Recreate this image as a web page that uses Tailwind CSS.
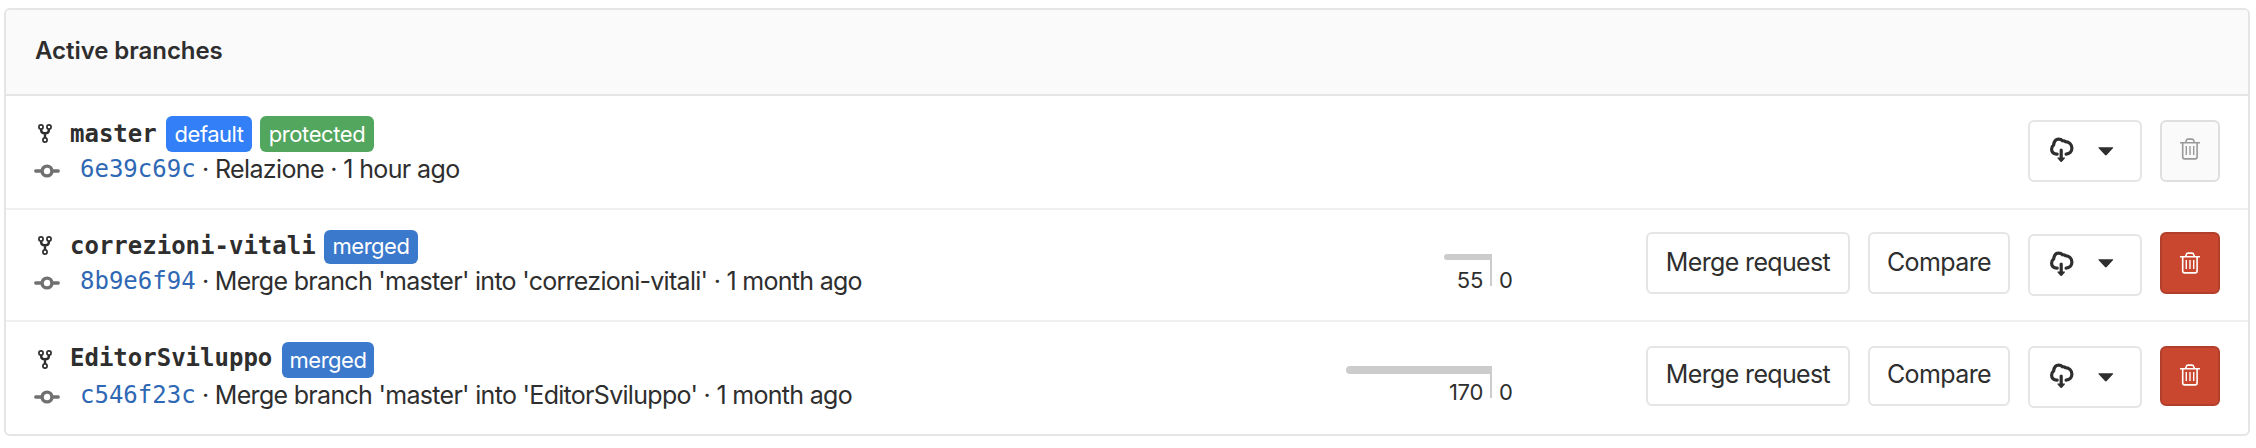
<!DOCTYPE html>
<html lang="en"><head><meta charset="utf-8"><title>Branches</title>
<script src="https://cdn.jsdelivr.net/npm/@tailwindcss/browser@4"></script></head>
<body class="bg-white font-['Inter',sans-serif] text-[25px] text-[#2e2e2e]">
<svg class="hidden">
<symbol id="fork" viewBox="0 0 14 20"><g fill="none" stroke="currentColor" stroke-width="1.7"><circle cx="3" cy="3" r="2.1"/><circle cx="11" cy="3" r="2.1"/><circle cx="7" cy="16" r="2.1"/></g><path d="M3.2 5.2v1.3c0 1.8 1.2 2.7 3.8 2.7s3.800-.9 3.800-2.700V5.200M7 9.200v4.700" fill="none" stroke="currentColor" stroke-width="2.400"/></symbol>
<symbol id="commit" viewBox="0 0 26 14"><path d="M1.800 7h5M19.200 7h5" stroke="currentColor" stroke-width="3.400" stroke-linecap="round"/><circle cx="13" cy="7" r="4.900" fill="none" stroke="currentColor" stroke-width="3.400"/></symbol>
<symbol id="cloud" viewBox="0 0 24 26"><path d="M7.200 17.100C3.500 17.300 1.600 15 1.600 12.200c0-2 .8-3.200 2-4.200C4.200 4 6.300 2.200 8.600 2.200c1.800 0 3 .5 4 1.600 1-.2 2 0 3 .9 3.500.4 6.300 2.800 6.300 6.600 0 3.400-2.400 5.600-5.800 5.800" fill="none" stroke="currentColor" stroke-width="3.200" stroke-linecap="round"/><path d="M11.200 13v9" stroke="currentColor" stroke-width="3.200" stroke-linecap="round"/><path d="M8 20.500h6.400c.6 0 .8.600.4 1l-2.900 3.300c-.4.400-1 .4-1.400 0l-2.900-3.300c-.4-.4-.2-1 .4-1z" fill="currentColor"/></symbol>
<symbol id="caret" viewBox="0 0 16 9"><path d="M1.200.2h13.200c.8 0 1 .6.500 1.100L8.700 8.100c-.5.500-1.200.5-1.700 0L.700 1.300C.2.800.4.2 1.200.2z" fill="currentColor"/></symbol>
<symbol id="trash" viewBox="0 0 20 22"><path d="M0 4.700h20M5.600 4.500l.8-2.300c.2-.700.7-1.100 1.500-1.100h4.200c.8 0 1.300.4 1.500 1.100l.8 2.300M2.700 4.700V19c0 1.300.7 1.900 1.900 1.900h10.600c1.200 0 1.900-.6 1.900-1.900V4.700" fill="none" stroke="currentColor" stroke-width="1.600"/><path d="M6.300 8v9M10 8v9M13.700 8v9" stroke="currentColor" stroke-width="1.400"/></symbol>
</svg>
<main class="pt-2 pl-1">
<section class="w-[2246px] h-[428px] rounded-md border-2 border-[#e5e5e5] overflow-hidden">
<header class="h-[86px] bg-[#fafafa] border-b-2 border-[#e5e5e5] pl-[29px] pt-[25px] text-[24px] leading-[32px] font-semibold tracking-[-0.05px]"><h2>Active branches</h2></header>
<ul>
<li class="flex h-[114px] border-b-2 border-[#f0f0f0] px-7">
 <div class="w-[1280px] pt-5">
  <div class="flex h-9 items-start"><svg class="w-[14px] h-5 ml-1 mt-2 mr-[18px]"><use href="#fork"/></svg><b class="font-['DejaVu_Sans_Mono',monospace] text-[24px] leading-9 w-[96px]">master</b><span class="h-9 w-[86px] rounded-md bg-[#327ff7] text-white text-[22px] leading-9 text-center tracking-[-0.5px]">default</span><span class="ml-2 h-9 w-[114px] rounded-md bg-[#52a65d] text-white text-[22px] leading-9 text-center tracking-[-0.4px]">protected</span></div>
  <div class="flex h-[34px] leading-[34px] whitespace-pre"><svg class="w-[26px] h-[14px] mt-3 mr-5 text-[#707070]"><use href="#commit"/></svg><a class="font-['DejaVu_Sans_Mono',monospace] text-[24px] text-[#2f68b4] w-[122px]">6e39c69c</a><span class="tracking-[-0.63px]">· Relazione · 1 hour ago</span></div>
 </div>
 <div class="ml-auto flex gap-[18px] pt-6">
  <button class="flex w-[114px] h-[62px] rounded-md border-2 border-[#e5e5e5]"><svg class="w-6 h-[26px] ml-[20px] mt-[15px]"><use href="#cloud"/></svg><svg class="w-4 h-[9px] ml-[24px] mt-[25px]"><use href="#caret"/></svg></button>
  <button class="w-[60px] h-[62px] rounded-md border-2 border-[#dfdfdf] bg-[#fafafa] text-[#999]"><svg class="w-5 h-[22px] ml-[18px] -mt-1"><use href="#trash"/></svg></button>
 </div>
</li>
<li class="flex h-[112px] border-b-2 border-[#f0f0f0] px-7">
 <div class="w-[1280px] pt-[18px]">
  <div class="flex h-9 items-start"><svg class="w-[14px] h-5 ml-1 mt-2 mr-[18px]"><use href="#fork"/></svg><b class="font-['DejaVu_Sans_Mono',monospace] text-[24px] leading-9 w-[254px]">correzioni-vitali</b><span class="mt-0.5 h-[34px] w-[94px] rounded-md bg-[#3b79cc] text-white text-[22px] leading-[32px] text-center tracking-[-0.5px]">merged</span></div>
  <div class="flex h-[34px] leading-[34px] whitespace-pre"><svg class="w-[26px] h-[14px] mt-3 mr-5 text-[#707070]"><use href="#commit"/></svg><a class="font-['DejaVu_Sans_Mono',monospace] text-[24px] text-[#2f68b4] w-[122px]">8b9e6f94</a><span class="tracking-[-0.71px]">· Merge branch 'master' into 'correzioni-vitali' · 1 month ago</span></div>
 </div>
 <div class="flex w-[210px] pt-[44px] text-[22px] leading-[28px]">
  <div class="w-[178px] h-8 border-r-2 border-[#ccc] flex flex-col items-end"><div class="shrink-0 w-[46px] h-1.5 rounded-l-full bg-[#ccc]"></div><span class="shrink-0 mt-1.5 pr-[7px] tracking-[-0.3px]">55</span></div><span class="mt-3 pl-[7px]">0</span>
 </div>
 <div class="ml-auto flex gap-[18px] pt-[22px]">
  <button class="w-[204px] h-[62px] rounded-md border-2 border-[#e5e5e5] tracking-[-0.65px]">Merge request</button>
  <button class="w-[142px] h-[62px] rounded-md border-2 border-[#e5e5e5] tracking-[-0.6px]">Compare</button>
  <button class="mt-0.5 flex w-[114px] h-[62px] rounded-md border-2 border-[#e5e5e5]"><svg class="w-6 h-[26px] ml-[20px] mt-[15px]"><use href="#cloud"/></svg><svg class="w-4 h-[9px] ml-[24px] mt-[23px]"><use href="#caret"/></svg></button>
  <button class="w-[60px] h-[62px] rounded-md border-2 border-[#b23f2b] bg-[#c9472f] text-white"><svg class="w-5 h-[22px] ml-[18px]"><use href="#trash"/></svg></button>
 </div>
</li>
<li class="flex h-[112px] px-7">
 <div class="w-[1280px] pt-[18px]">
  <div class="flex h-[38px] items-start"><svg class="w-[14px] h-5 ml-1 mt-[10px] mr-[18px]"><use href="#fork"/></svg><b class="font-['DejaVu_Sans_Mono',monospace] text-[24px] leading-9 w-[212px]">EditorSviluppo</b><span class="mt-0.5 h-9 w-[92px] rounded-md bg-[#3b79cc] text-white text-[22px] leading-9 text-center tracking-[-0.5px]">merged</span></div>
  <div class="flex h-[34px] leading-[34px] whitespace-pre"><svg class="w-[26px] h-[14px] mt-3 mr-5 text-[#707070]"><use href="#commit"/></svg><a class="font-['DejaVu_Sans_Mono',monospace] text-[24px] text-[#2f68b4] w-[122px]">c546f23c</a><span class="tracking-[-0.7px]">· Merge branch 'master' into 'EditorSviluppo' · 1 month ago</span></div>
 </div>
 <div class="flex w-[210px] pt-[44px] text-[22px] leading-[28px]">
  <div class="w-[178px] h-8 border-r-2 border-[#ccc] flex flex-col items-end"><div class="shrink-0 w-[144px] h-2 rounded-l-full bg-[#ccc]"></div><span class="shrink-0 mt-1 pr-[7px] tracking-[-0.3px]">170</span></div><span class="mt-3 pl-[7px]">0</span>
 </div>
 <div class="ml-auto flex gap-[18px] pt-6">
  <button class="w-[204px] h-[60px] pb-0.5 rounded-md border-2 border-[#e5e5e5] tracking-[-0.65px]">Merge request</button>
  <button class="w-[142px] h-[60px] pb-0.5 rounded-md border-2 border-[#e5e5e5] tracking-[-0.6px]">Compare</button>
  <button class="flex w-[114px] h-[62px] rounded-md border-2 border-[#e5e5e5]"><svg class="w-6 h-[26px] ml-[20px] mt-[15px]"><use href="#cloud"/></svg><svg class="w-4 h-[9px] ml-[24px] mt-[25px]"><use href="#caret"/></svg></button>
  <button class="w-[60px] h-[60px] rounded-md border-2 border-[#b23f2b] bg-[#c9472f] text-white"><svg class="w-5 h-[22px] ml-[18px] -mt-0.5"><use href="#trash"/></svg></button>
 </div>
</li>
</ul></section></main>
</body></html>
